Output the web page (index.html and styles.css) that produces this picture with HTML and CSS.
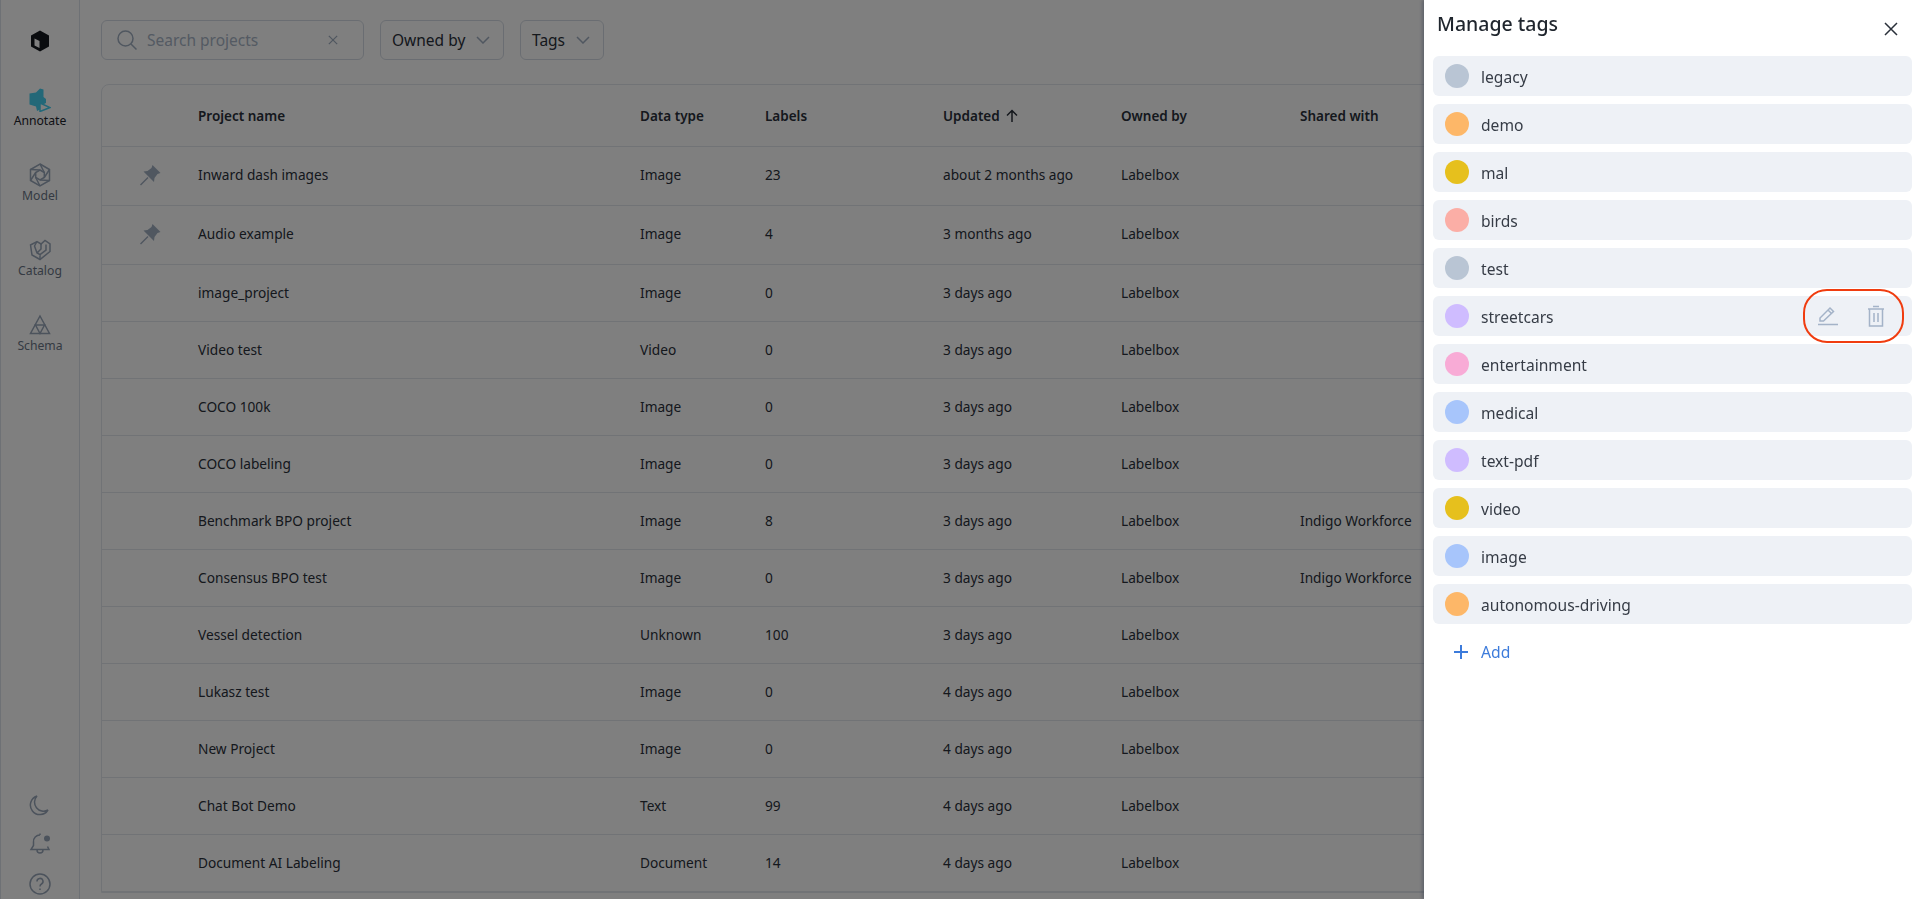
FILE: index.html
```html
<!DOCTYPE html>
<html lang="en">
<head>
<meta charset="utf-8">
<title>Manage tags</title>
<link rel="stylesheet" href="styles.css">
</head>
<body>
<div class="app">
  <nav class="rail">
    <svg class="logo" viewBox="0 0 20 22" width="20" height="22"><path class="logo-fill" d="M10 .500l9 5v11L10 21.500 1 16.500v-11zM4.500 8.500v7l5 2.500v-7z"/></svg>
    <a class="rail-item active">
      <svg viewBox="0 0 22 24" width="22" height="24"><path class="annot" d="M.500 5.500L7 4.500 11 .500 14.500 1.500V9L17 11V15L11 18V21.500L8 23 7 18.500 .500 16.500z"/><path class="annot-o" d="M11 15L21 19.500 11 23.500z"/></svg>
      <span>Annotate</span>
    </a>
    <a class="rail-item">
      <svg viewBox="0 0 22 24" width="22" height="24" class="ico"><path d="M11 1L20.500 6.500V17.500L11 23 1.500 17.500V6.500z"/><path d="M11 7L15.300 9.500V14.500L11 17 6.700 14.500V9.500z"/><path d="M11 1L15.300 9.500M20.500 6.500L15.300 14.500M20.500 17.500L11 17M11 23L6.700 14.500M1.500 17.500L6.700 9.500M1.500 6.500L11 7"/></svg>
      <span>Model</span>
    </a>
    <a class="rail-item">
      <svg viewBox="0 0 22 24" width="22" height="24" class="ico"><path d="M1.500 7L8 3.500 12 6 16 2.500 21 6V13.500L11 21.500 3 17z"/><path d="M8 3.500L5.500 8 8 15 11 16.500 17 12V6.500M12 6V11L8 15M11 16.500V21.500"/></svg>
      <span>Catalog</span>
    </a>
    <a class="rail-item">
      <svg viewBox="0 0 22 24" width="22" height="24" class="ico"><path d="M11 3L20.500 20.500H1.500z"/><path d="M6.500 12H15.500L11 20.500z"/></svg>
      <span>Schema</span>
    </a>
    <div class="rail-foot">
      <svg viewBox="0 0 22 22" width="22" height="22" class="ico"><path d="M8 2a9 9 0 0 0 11 14A9.500 9.500 0 1 1 8 2z"/></svg>
      <svg viewBox="0 0 24 24" width="24" height="24" class="ico"><path d="M12 3a6.500 6.500 0 0 0-6.500 7v3.500L3 17.500h18l-1.500-3M12 3v-1.500M9 18a3 3 0 0 0 6 0"/><circle class="dot" cx="19" cy="6.500" r="3"/></svg>
      <svg viewBox="0 0 24 24" width="24" height="24" class="ico"><circle cx="12" cy="12" r="10"/><path d="M9 9.500a3 3 0 1 1 4.500 2.500c-1 .6-1.500 1.200-1.500 2.500M12 16.500v1.500"/></svg>
    </div>
  </nav>
  <main class="content">
    <div class="filters">
      <div class="search">
        <svg viewBox="0 0 22 22" width="22" height="22" class="ico thin"><circle cx="9.500" cy="9.500" r="7.500"/><path d="M15 15l5.500 5.500"/></svg>
        <span class="placeholder">Search projects</span>
        <svg viewBox="0 0 12 12" width="10" height="10" class="ico thin"><path d="M1 1l10 10M11 1L1 11"/></svg>
      </div>
      <div class="select owned">Owned by <svg viewBox="0 0 14 8" width="14" height="8" class="ico thin"><path d="M1 1l6 6 6-6"/></svg></div>
      <div class="select tags">Tags <svg viewBox="0 0 14 8" width="14" height="8" class="ico thin"><path d="M1 1l6 6 6-6"/></svg></div>
    </div>
    <div class="table">
      <div class="row head"><span></span><span>Project name</span><span>Data type</span><span>Labels</span><span class="updated">Updated <svg viewBox="0 0 12 14" width="12" height="14" class="ico dark"><path d="M6 13V1.500M1 6.500l5-5 5 5"/></svg></span><span>Owned by</span><span>Shared with</span></div>
      <div class="row tall"><span class="pin"><svg viewBox="0 0 22 22" width="22" height="22"><path class="pin-f" d="M13.500 1L21.500 9 18.500 10 15.500 14 15 18 4.500 7.500 8.500 7 12.500 4z"/><path class="pin-s" d="M9 13.500L1.500 21"/></svg></span><span>Inward dash images</span><span>Image</span><span>23</span><span>about 2 months ago</span><span>Labelbox</span><span></span></div>
      <div class="row tall"><span class="pin"><svg viewBox="0 0 22 22" width="22" height="22"><path class="pin-f" d="M13.500 1L21.500 9 18.500 10 15.500 14 15 18 4.500 7.500 8.500 7 12.500 4z"/><path class="pin-s" d="M9 13.500L1.500 21"/></svg></span><span>Audio example</span><span>Image</span><span>4</span><span>3 months ago</span><span>Labelbox</span><span></span></div>
      <div class="row"><span></span><span>image_project</span><span>Image</span><span>0</span><span>3 days ago</span><span>Labelbox</span><span></span></div>
      <div class="row"><span></span><span>Video test</span><span>Video</span><span>0</span><span>3 days ago</span><span>Labelbox</span><span></span></div>
      <div class="row"><span></span><span>COCO 100k</span><span>Image</span><span>0</span><span>3 days ago</span><span>Labelbox</span><span></span></div>
      <div class="row"><span></span><span>COCO labeling</span><span>Image</span><span>0</span><span>3 days ago</span><span>Labelbox</span><span></span></div>
      <div class="row"><span></span><span>Benchmark BPO project</span><span>Image</span><span>8</span><span>3 days ago</span><span>Labelbox</span><span>Indigo Workforce</span></div>
      <div class="row"><span></span><span>Consensus BPO test</span><span>Image</span><span>0</span><span>3 days ago</span><span>Labelbox</span><span>Indigo Workforce</span></div>
      <div class="row"><span></span><span>Vessel detection</span><span>Unknown</span><span>100</span><span>3 days ago</span><span>Labelbox</span><span></span></div>
      <div class="row"><span></span><span>Lukasz test</span><span>Image</span><span>0</span><span>4 days ago</span><span>Labelbox</span><span></span></div>
      <div class="row"><span></span><span>New Project</span><span>Image</span><span>0</span><span>4 days ago</span><span>Labelbox</span><span></span></div>
      <div class="row"><span></span><span>Chat Bot Demo</span><span>Text</span><span>99</span><span>4 days ago</span><span>Labelbox</span><span></span></div>
      <div class="row"><span></span><span>Document AI Labeling</span><span>Document</span><span>14</span><span>4 days ago</span><span>Labelbox</span><span></span></div>
    </div>
  </main>
</div>
<div class="overlay"></div>
<aside class="drawer">
  <header class="drawer-head">
    <h1>Manage tags</h1>
    <svg viewBox="0 0 14 14" width="14" height="14" class="close"><path d="M1 1l12 12M13 1L1 13"/></svg>
  </header>
  <ul class="tag-list">
    <li class="tag"><i class="swatch slate"></i><span class="tag-name">legacy</span></li>
    <li class="tag"><i class="swatch orange"></i><span class="tag-name">demo</span></li>
    <li class="tag"><i class="swatch yellow"></i><span class="tag-name">mal</span></li>
    <li class="tag"><i class="swatch salmon"></i><span class="tag-name">birds</span></li>
    <li class="tag"><i class="swatch slate"></i><span class="tag-name">test</span></li>
    <li class="tag"><i class="swatch violet"></i><span class="tag-name">streetcars</span>
      <div class="tag-actions">
        <svg viewBox="0 0 22 20" width="22" height="20" class="act"><path d="M3 15v-3L13 2l3.500 3.500-10 9.500zM11 4l3.500 3.500M1 18.500h20"/></svg>
        <svg viewBox="0 0 18 22" width="18" height="22" class="act"><path d="M1 4h16M6 1.500h6M2.500 4v17h13V4M7 8v9M11 8v9"/></svg>
      </div>
    </li>
    <li class="tag"><i class="swatch pink"></i><span class="tag-name">entertainment</span></li>
    <li class="tag"><i class="swatch blue"></i><span class="tag-name">medical</span></li>
    <li class="tag"><i class="swatch violet"></i><span class="tag-name">text-pdf</span></li>
    <li class="tag"><i class="swatch yellow"></i><span class="tag-name">video</span></li>
    <li class="tag"><i class="swatch blue"></i><span class="tag-name">image</span></li>
    <li class="tag"><i class="swatch orange"></i><span class="tag-name">autonomous-driving</span></li>
  </ul>
  <div class="add"><svg viewBox="0 0 16 16" width="16" height="16"><path d="M8 1v14M1 8h14"/></svg>Add</div>
</aside>
<div class="callout"></div>
</body>
</html>
```
FILE: styles.css
```css
* { box-sizing: border-box; }
html, body { margin: 0; height: 100%; overflow: hidden; }
body { font-family: "Noto Sans", "Liberation Sans", sans-serif; font-size: 14px; color: #2a303a; background: #fff; }
.app { display: flex; height: 899px; }
.rail { width: 80px; flex: none; border-right: 1px solid #dde2ea; border-left: 1px solid #dde2ea; display: flex; flex-direction: column; align-items: center; padding-top: 30px; }
.logo { margin-bottom: 36px; }
.logo-fill { fill: #15191f; fill-rule: evenodd; }
.rail-item { width: 100%; display: flex; flex-direction: column; align-items: center; height: 75px; font-size: 12.200px; color: #6a7586; }
.rail-item.active { color: #1d232b; }
.rail-item span { line-height: 16px; margin-top: 1px; }
.annot { fill: #46d0f0; }
.annot-o { fill: #fff; stroke: #46d0f0; stroke-width: 1.500; }
.ico { fill: none; stroke: #98a6b9; stroke-width: 1.500; }
.ico.thin { stroke: #a0aec0; }
.ico.dark { stroke: #2a303a; }
.dot { fill: #98a6b9; stroke: none; }
.rail-foot { margin-top: auto; display: flex; flex-direction: column; align-items: center; gap: 16px; padding-bottom: 3px; }
.content { flex: 1; min-width: 0; padding: 20px 0 0 21px; }
.filters { display: flex; gap: 16px; height: 40px; margin-bottom: 24px; }
.search, .select { border: 1px solid #d5dbe4; border-radius: 6px; height: 40px; display: flex; align-items: center; }
.search { width: 263px; padding: 0 25px 0 14px; gap: 9px; font-size: 15.500px; justify-content: space-between; }
.placeholder { color: #a8b5c6; flex: 1; }
.select { font-size: 15.500px; color: #2a303a; padding: 0 13px 0 11px; justify-content: space-between; }
.owned { width: 124px; }
.tags { width: 84px; }
.table { border: 1px solid #e3e7ed; border-radius: 8px 8px 0 0; width: 1800px; }
.row { display: grid; grid-template-columns: 96px 442px 125px 178px 178px 179px 1fr; align-items: center; height: 57px; border-bottom: 1px solid #e3e7ed; font-size: 13.700px; color: #2a303a; padding-bottom: 1px; }
.row.head { height: 62px; font-weight: 600; font-size: 13.500px; padding-bottom: 0; }
.row.tall { height: 59px; padding-bottom: 3px; }
.updated { display: flex; align-items: center; gap: 6px; }
.pin { display: flex; justify-content: center; }
.pin-f { fill: #a0aec0; }
.pin-s { stroke: #a0aec0; stroke-width: 1.500; fill: none; }
.overlay { position: fixed; inset: 0; background: rgba(0, 0, 0, .5); }
.drawer { position: fixed; top: 0; right: 0; bottom: 0; width: 493px; background: #fff; box-shadow: -2px 0 3px rgba(40, 50, 70, .35); padding: 0 5px 0 9px; }
.drawer-head { height: 56px; display: flex; justify-content: space-between; padding: 12px 14px 0 4px; }
h1 { margin: 0; font-size: 19.500px; font-weight: 500; line-height: 24px; color: #1f252d; }
.close { margin-top: 10px; fill: none; stroke: #2a303a; stroke-width: 1.500; }
.tag-list { list-style: none; margin: 0; padding: 0; display: flex; flex-direction: column; gap: 8px; }
.tag { height: 40px; background: #eef1f6; border-radius: 6px; display: flex; align-items: center; padding-left: 12px; font-size: 15.600px; color: #363c46; }
.tag-name { padding-top: 2px; }
.swatch { width: 24px; height: 24px; border-radius: 50%; margin-right: 12px; flex: none; }
.slate { background: #b9c5d4; }
.orange { background: #fdb768; }
.yellow { background: #e6c01d; }
.salmon { background: #fbaea6; }
.violet { background: #cfbcff; }
.pink { background: #f8abd6; }
.blue { background: #a7c5fb; }
.tag-actions { margin-left: auto; display: flex; align-items: center; gap: 28px; padding-right: 27px; }
.act { fill: none; stroke: #a4b3c8; stroke-width: 1.500; }
.add { display: flex; align-items: center; gap: 12px; margin: 8px 0 0 20px; height: 40px; font-size: 15.700px; color: #3c7bdb; }
.add svg { fill: none; stroke: #3c7bdb; stroke-width: 2; }
.callout { position: fixed; left: 1803px; top: 289px; width: 101px; height: 54px; border: 2px solid #f03c0f; border-radius: 24px; }
```
